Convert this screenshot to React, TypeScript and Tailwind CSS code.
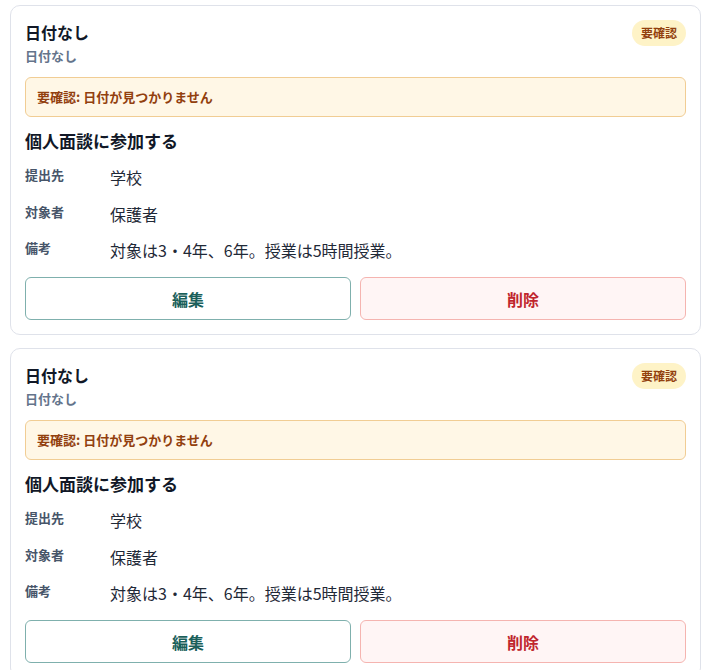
const FONT = { fontFamily: '"Noto Sans CJK JP", "Noto Sans", sans-serif' };

type Item = { date: string; sub: string; title: string; to: string; target: string; note: string };

const items: Item[] = [
  { date: "日付なし", sub: "日付なし", title: "個人面談に参加する", to: "学校", target: "保護者", note: "対象は3・4年、6年。授業は5時間授業。" },
  { date: "日付なし", sub: "日付なし", title: "個人面談に参加する", to: "学校", target: "保護者", note: "対象は3・4年、6年。授業は5時間授業。" },
];

function Row({ label, value }: { label: string; value: string }) {
  return (
    <div className="flex items-start">
      <div className="w-[85px] shrink-0 text-[13px] font-bold text-[#475569] leading-[18px] mt-[1px]">{label}</div>
      <div className="text-[16px] text-[#1f2937] leading-[24px]">{value}</div>
    </div>
  );
}

function TaskCard({ item }: { item: Item }) {
  return (
    <div className="bg-white border border-[#dfe2ea] rounded-[10px] px-[14px] pt-[15px] pb-[14px]">
      <div className="flex justify-between items-start">
        <div>
          <div className="text-[16px] font-bold text-[#111827] leading-[22px]">{item.date}</div>
          <div className="text-[13px] font-semibold text-[#64748b] leading-[18px] mt-[4px]">{item.sub}</div>
        </div>
        <span className="-mt-[1px] bg-[#fef3c7] text-[#92400e] text-[12px] font-bold rounded-full px-[9px] h-[26px] flex items-center">要確認</span>
      </div>
      <div className="mt-[12px] h-[40px] flex items-center px-[11px] bg-[#fff7e6] border border-[#f1cd94] rounded-[6px] text-[13px] font-bold text-[#92400e]">
        要確認: 日付が見つかりません
      </div>
      <h2 className="mt-[12px] text-[17px] font-bold text-[#111827] leading-[24px]">{item.title}</h2>
      <div className="mt-[12px] flex flex-col gap-[12.5px]">
        <Row label="提出先" value={item.to} />
        <Row label="対象者" value={item.target} />
        <Row label="備考" value={item.note} />
      </div>
      <div className="mt-[15px] grid grid-cols-2 gap-[9px]">
        <button className="h-[43px] rounded-[6px] border border-[#7fb0ad] bg-white text-[16px] font-bold text-[#1a5f5a]">編集</button>
        <button className="h-[43px] rounded-[6px] border border-[#f5b4b0] bg-[#fff5f5] text-[16px] font-bold text-[#c0262d]">削除</button>
      </div>
    </div>
  );
}

export default function App() {
  return (
    <div style={FONT} className="bg-white min-h-screen px-[10px] pt-[5px] flex flex-col gap-[13px]">
      {items.map((it, i) => (
        <TaskCard key={i} item={it} />
      ))}
    </div>
  );
}
